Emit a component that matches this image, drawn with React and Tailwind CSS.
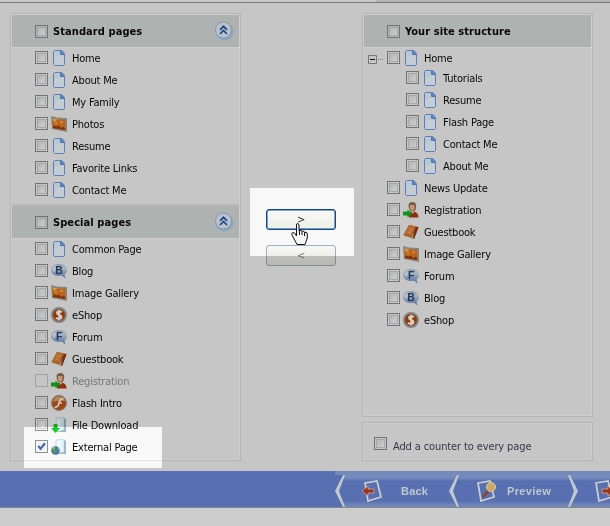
import React from "react";

const Check = ({ checked, disabled }) => (
  <span className={"flex h-[13px] w-[13px] shrink-0 items-center justify-center border " + (disabled ? "border-[#a3a39d]" : "border-[#747474]")}>
    {!disabled && (
      <span className="block h-[9px] w-[9px] border border-[#a4a8aa] bg-gradient-to-br from-[#b2b7ba] to-[#cccccb]">
        {checked && (
          <svg className="-ml-px -mt-px block h-[9px] w-[9px]" viewBox="0 0 9 9">
            <path d="M0 0H9V9H0Z" fill="#bfc2c4" />
            <path d="M1.3 3.8L3.6 6.8L8 1.2" fill="none" stroke="#3a508f" strokeWidth="2.2" />
          </svg>
        )}
      </span>
    )}
  </span>
);

const PageIcon = () => (
  <svg className="h-4 w-4" viewBox="0 0 16 16">
    <path d="M3.5.5H10.5L13.5 3.5V14.5L12.5 15.5H3.5L2.5 14.5V1.5Z" fill="#b7c8d1" stroke="#5f7dba" />
    <path d="M3 9Q7 4 13 6V14.5L12 15H4L3 14Z" fill="#c3cdd3" />
    <path d="M10 .5H11L13.5 3V4H10Z" fill="#5d86bb" />
    <path d="M9.5 1V4.5H13" fill="none" stroke="#3a62a3" strokeWidth=".8" />
  </svg>
);

const PhotoIcon = () => (
  <svg className="h-4 w-4" viewBox="0 0 16 16">
    <path d="M0 0L6 1.5L16 2V16L1 13Z" fill="#85877f" />
    <path d="M1 2.5L14.5 4V14L1.5 12Z" fill="#b9651d" />
    <path d="M1 2.5L7 3.5L3 6Z" fill="#cf9d5a" />
    <path d="M1.5 12L3 9.5L6 10.5L8 9.5L10 12L13 10.5L14.5 14Z" fill="#80300f" />
    <path d="M4 6H6V8H4ZM9 5H12V7H9Z" fill="#d5852d" />
  </svg>
);

const BubbleIcon = ({ letter }) => (
  <svg className="h-4 w-4" viewBox="0 0 16 16">
    <defs>
      <linearGradient id={"bubble" + letter} x1="0" y1="0" x2="0" y2="1">
        <stop offset="0" stopColor="#8e9ba3" />
        <stop offset=".3" stopColor="#a7b6bf" />
        <stop offset=".6" stopColor="#8194ad" />
        <stop offset="1" stopColor="#5370a6" />
      </linearGradient>
    </defs>
    <path d="M8 1C3 1 0 3.7 0 7S3 13 8 13L11 12.8L14.5 15.5L13.6 11.5C15.2 10.4 16 9 16 7C16 3.7 13 1 8 1Z" fill={"url(#bubble" + letter + ")"} />
    <path d="M2 5Q4 2 6 2.2L4 8L2 9Z" fill="#bdc8cd" opacity=".8" />
    <text x="8" y="11" textAnchor="middle" fontFamily="Liberation Sans" fontSize="10.5" fontWeight="bold" fill="#26375f">{letter}</text>
  </svg>
);

const ShopIcon = () => (
  <svg className="h-4 w-4" viewBox="0 0 16 16">
    <circle cx="8" cy="8" r="7" fill="#983809" stroke="#7f8383" strokeWidth="2" />
    <path d="M10.8 5.2C9 3.7 6 4 6 6C6 8 10.5 7.5 10.5 10C10.5 12 7 12.5 5 10.7M8.2 2.8V13.5" fill="none" stroke="#d0cfca" strokeWidth="2" />
  </svg>
);

const BookIcon = () => (
  <svg className="h-4 w-4" viewBox="0 0 16 16">
    <path d="M6 1L15.5 3L11 15L.5 11Z" fill="#8f4516" />
    <path d="M6 1L13 2.5L8 12L1 10.5Z" fill="#b36a30" />
    <path d="M13 3L15.5 3.5L11 15L9 14Z" fill="#75300f" />
    <path d="M.5 11L8 13L10.5 8L10.5 15L.5 12.3Z" fill="#bca480" opacity=".7" />
    <path d="M6.5 4L9.5 5M5.5 6L8.5 7M4.5 8L7.5 9" stroke="#ca8b50" />
  </svg>
);

const PersonIcon = () => (
  <svg className="h-4 w-4" viewBox="0 0 16 16">
    <path d="M6 10H12Q15.5 11 15.5 15.5H6Z" fill="#8b300d" />
    <path d="M5.5 3Q6 0 9.5 0T13.2 3.5Q13.2 10 9.5 10T5.5 3Z" fill="#765b48" />
    <path d="M7 3H11.5V7L9.5 9.2L7 7Z" fill="#c99673" />
    <path d="M8 9.5H11L10 12Z" fill="#c8b8a7" />
    <path d="M0 9.5H4.5V7.5L9 11.5L4.5 15.5V13.5H0Z" fill="#11931b" />
  </svg>
);

const FlashIcon = () => (
  <svg className="h-4 w-4" viewBox="0 0 16 16">
    <circle cx="8" cy="8" r="7.3" fill="#9e4515" stroke="#837267" strokeWidth="1.2" />
    <path d="M2 7Q3 1.2 8.5 1.5Q13 2 14 6Q7 5 2 7Z" fill="#b98458" />
    <path d="M12.5 3.7Q9 3.5 8 8T3.5 12.5M7 8H11" fill="none" stroke="#d4c4b4" strokeWidth="1.7" />
  </svg>
);

const SheetShape = () => (
  <g>
    <path d="M5 1L13 0V13L5 15Z" fill="#b6c3c9" stroke="#98a9b2" strokeWidth=".7" />
    <path d="M13 1L15 2V15L5 15L13 13Z" fill="#7f929c" />
    <path d="M6 3L9 2.5V10L6 12Z" fill="#c5ced1" />
  </g>
);

const DownloadIcon = () => (
  <svg className="h-4 w-4" viewBox="0 0 16 16">
    <SheetShape />
    <path d="M2.5 7H6.5V11H9L4.5 16L0 11H2.5Z" fill="#12a31b" />
  </svg>
);

const ExternalIcon = () => (
  <svg className="h-4 w-4" viewBox="0 0 16 16">
    <SheetShape />
    <circle cx="4.5" cy="11.5" r="4.3" fill="#395b8c" />
    <path d="M1 10Q3 7 5 8L4 10L6 12L4 15Q3 12 1 12Z" fill="#3f8040" />
    <path d="M6 8L8 10L7 12Z" fill="#689a4a" />
    <path d="M2 9L4 8L3 10Z" fill="#b8c3c2" />
  </svg>
);

const icons = {
  page: <PageIcon />, photo: <PhotoIcon />, blog: <BubbleIcon letter="B" />, forum: <BubbleIcon letter="F" />,
  shop: <ShopIcon />, book: <BookIcon />, person: <PersonIcon />, flash: <FlashIcon />,
  download: <DownloadIcon />, external: <ExternalIcon />,
};

const Row = ({ icon, label, disabled, checked }) => (
  <div className="flex h-[22px] items-center">
    <span className="mb-px shrink-0"><Check disabled={disabled} checked={checked} /></span>
    <span className="ml-[3px] shrink-0">{icons[icon]}</span>
    <span className={"ml-[5px] mt-[2px] whitespace-nowrap " + (disabled ? "text-[#777]" : "")}>{label}</span>
  </div>
);

const Collapse = () => (
  <svg className="mr-[5px] h-5 w-5" viewBox="0 0 20 20">
    <circle cx="10.5" cy="10.5" r="9" fill="#8ca6bf" />
    <circle cx="9.5" cy="9" r="8" fill="#bcc3c8" stroke="#7f99bb" />
    <path d="M6 8.8L9.5 5.3L13 8.8M6 13L9.5 9.5L13 13" fill="none" stroke="#174787" strokeWidth="1.7" />
  </svg>
);

const Header = ({ label, collapse }) => (
  <div className="flex h-8 shrink-0 items-center bg-[#aeb2b0] pl-[23px] font-bold">
    <span className="mt-px shrink-0"><Check /></span>
    <span className="ml-[5px] mt-[2px] grow whitespace-nowrap tracking-[0.08px]">{label}</span>
    {collapse && <Collapse />}
  </div>
);

const standard = [["page", "Home"], ["page", "About Me"], ["page", "My Family"], ["photo", "Photos"], ["page", "Resume"], ["page", "Favorite Links"], ["page", "Contact Me"]];
const special = [["page", "Common Page"], ["blog", "Blog"], ["photo", "Image Gallery"], ["shop", "eShop"], ["forum", "Forum"], ["book", "Guestbook"], ["person", "Registration", true], ["flash", "Flash Intro"], ["download", "File Download"], ["external", "External Page", false, true]];
const children = ["Tutorials", "Resume", "Flash Page", "Contact Me", "About Me"];
const site = [["page", "News Update"], ["person", "Registration"], ["book", "Guestbook"], ["photo", "Image Gallery"], ["forum", "Forum"], ["blog", "Blog"], ["shop", "eShop"]];

const MoveButton = ({ label, muted }) => (
  <button className={"h-[21px] w-[70px] rounded-[3px] border bg-gradient-to-b text-[11px] leading-[18px] " + (muted ? "border-[#7c8e9b] from-[#c6c6c5] to-[#b9b9b2] text-[#56636b]" : "border-[#0c3b74] from-[#c7c7c6] to-[#bebeb9] text-[#202020] shadow-[inset_0_0_0_0.5px_#0c3b74]")}>
    {label}
  </button>
);

const NavDivider = ({ flip }) => (
  <svg className="h-8 w-[10px] shrink-0" viewBox="0 0 10 32">
    {!flip && <path d="M0 0H9L0 16L9 32H0Z" fill="#586fb1" />}
    <path d={flip ? "M0 0H2L10 16L2 32H0L6 16Z" : "M10 0H8L0 16L8 32H10L4 16Z"} fill="#c1c9cf" />
  </svg>
);

const NavPage = ({ children: art }) => (
  <svg className="h-[22px] w-[22px] shrink-0" viewBox="0 0 22 22">
    <path d="M3 3L15 1L19 17L6 21Z" fill="none" stroke="#ced0ce" strokeWidth="1.7" />
    {art}
  </svg>
);

export default function App() {
  return (
    <div className="relative isolate flex h-[526px] w-[610px] flex-col overflow-hidden bg-[#c6c6c6] text-[11px] leading-[14px] tracking-[-0.2px] text-[#080808] [font-family:'DejaVu_Sans_Condensed','DejaVu_Sans',sans-serif] [font-stretch:condensed]">
      <div className="flex h-[3px] shrink-0 border-b border-[#777]">
        <div className="w-[376px] bg-[#c6c9c1]" />
        <div className="grow bg-[#b0b4b2]" />
      </div>
      <main className="flex h-[468px] shrink-0 pl-[10px] pt-[10px]">
        <div className="flex h-[448px] w-[231px] flex-col border border-[#b5b5b5]">
          <section className="h-[190px] shrink-0 border border-b-0 border-[#cecece]">
            <Header label="Standard pages" collapse />
            <div className="pl-[23px] shadow-[inset_0_1px_0_#cecece]">
              {standard.map(([icon, label]) => <Row key={label} icon={icon} label={label} />)}
            </div>
          </section>
          <section className="grow border border-t-2 border-[#cecece] border-t-[#b9b9b9]">
            <Header label="Special pages" collapse />
            <div className="pl-[23px] shadow-[inset_0_1px_0_#cecece]">
              {special.map(([icon, label, disabled, checked]) => <Row key={label} icon={icon} label={label} disabled={disabled} checked={checked} />)}
            </div>
          </section>
        </div>
        <div className="ml-[25px] mt-[196px] flex w-[70px] flex-col gap-[15px]">
          <MoveButton label=">" />
          <MoveButton label="<" muted />
        </div>
        <div className="ml-[26px] w-[231px]">
          <section className="h-[404px] border border-[#b5b5b5]">
            <div className="h-full border border-[#cecece]">
              <Header label="Your site structure" />
              <div className="flex h-5 pl-1 shadow-[inset_0_1px_0_#cecece]">
                <svg className="mt-[8px] h-[9px] w-[19px] shrink-0" viewBox="0 0 19 9">
                  <path d="M.5.5H8.5V8.5H.5Z" fill="#c6c6c6" stroke="#777" />
                  <path d="M2 4.5H7" stroke="#111" />
                  <path d="M10 4.5H16" stroke="#777" strokeDasharray="1 1" />
                </svg>
                <Row icon="page" label="Home" />
              </div>
              <div className="pl-[42px]">
                {children.map((label) => <Row key={label} icon="page" label={label} />)}
              </div>
              <div className="pl-[23px]">
                {site.map(([icon, label]) => <Row key={label} icon={icon} label={label} />)}
              </div>
            </div>
          </section>
          <section className="mt-[5px] flex h-[39px] items-start border border-[#b5b5b5]">
            <div className="flex h-full w-full border border-[#cecece] pl-[10px] pt-[13px]">
              <Check />
              <span className="ml-[6px] mt-[3px] whitespace-nowrap tracking-[-0.12px] text-[#3a3548]">Add a counter to every page</span>
            </div>
          </section>
        </div>
      </main>
      <nav className="flex h-[37px] shrink-0 overflow-hidden border-b border-[#888] bg-[#586fb1] pl-[335px] font-bold text-[#bdc9cc] [font-family:'Liberation_Sans',sans-serif]">
        <div className="flex grow items-center bg-[linear-gradient(#748abb_0,#748abb_7px,#586fb1_10px,#586fb1_30px,#7085bb_34px)] pt-1">
          <NavDivider />
          <span className="ml-[17px] flex">
            <NavPage><path d="M0 11L6 6V9H12V13H6V16Z" fill="#9b3518" stroke="#d6b49d" strokeWidth=".7" /></NavPage>
          </span>
          <span className="ml-[17px] w-[26px] tracking-[0.2px]">Back</span>
          <span className="ml-[22px] flex">
            <svg className="h-8 w-[10px]" viewBox="0 0 10 32"><path d="M10 0H8L0 16L8 32H10L4 16Z" fill="#c1c9cf" /></svg>
          </span>
          <span className="ml-[16px] flex">
            <NavPage><path d="M8 17L14 10" stroke="#99401d" strokeWidth="2.5" /><circle cx="16" cy="7" r="4.5" fill="#cba867" stroke="#d8cba8" /></NavPage>
          </span>
          <span className="ml-[10px] w-[45px] tracking-[0.35px]">Preview</span>
          <span className="ml-[16px] flex"><NavDivider flip /></span>
          <span className="ml-[15px] flex">
            <NavPage><path d="M9 9H15V6L21 11L15 16V13H9Z" fill="#9b3518" stroke="#d6b49d" strokeWidth=".7" /></NavPage>
          </span>
        </div>
      </nav>
      <div className="grow bg-[#cdcdcd]" />
      <div className="absolute left-[250px] top-[188px] h-[68px] w-[104px] bg-[#333] mix-blend-color-dodge" />
      <div className="absolute left-[24px] top-[427px] h-[41px] w-[138px] bg-[#333] mix-blend-color-dodge" />
      <svg className="absolute left-[291px] top-[223px] h-[22px] w-[17px]" viewBox="0 0 17 22">
        <path d="M5.5 13V2Q5.5.5 6.5.5T8 2V8Q10.5 6 11 8.5Q13 7 13.5 9.5Q16.5 8.5 16.3 11V15L14 21.5H6L1 12Q.2 10 2 9.5T5.5 13Z" fill="#f5f5f5" stroke="#111" />
        <path d="M8.5 8V12M11 8.5V12M13.5 9.5V13" stroke="#111" />
      </svg>
    </div>
  );
}
